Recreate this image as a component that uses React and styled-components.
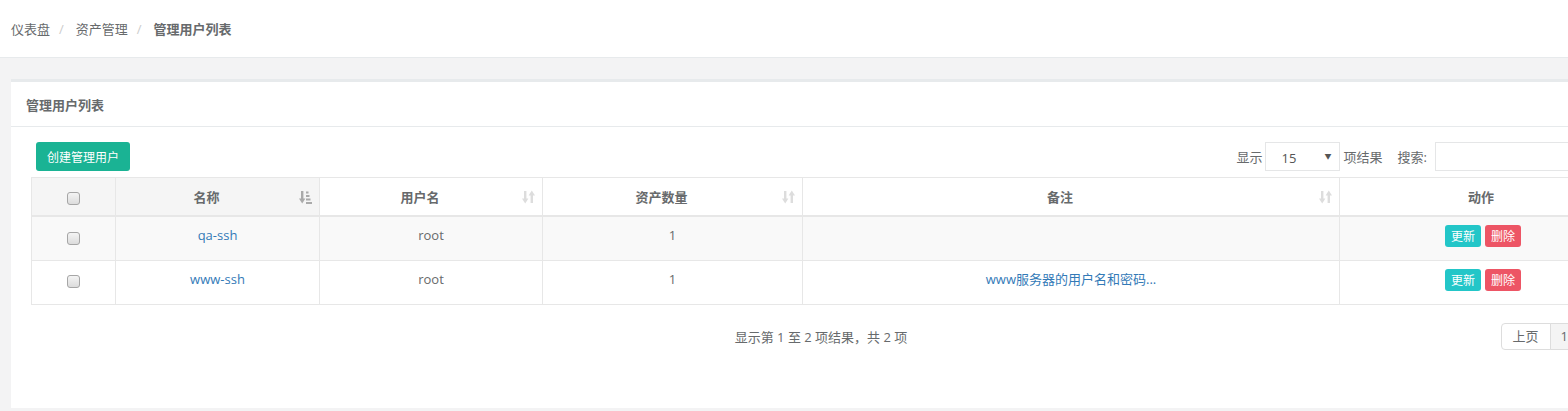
import React from "react";
import styled, { createGlobalStyle } from "styled-components";

const GlobalStyle = createGlobalStyle`
  html, body {
    margin: 0;
    padding: 0;
    overflow: hidden;
    background: #f3f3f4;
  }
  body {
    font-family: "Open Sans", "Noto Sans CJK SC", sans-serif;
    font-size: 13px;
    color: #676a6c;
  }
`;

const Page = styled.div`
  width: 1660px;
  min-height: 411px;
  background: #f3f3f4;
`;

const TopBar = styled.div`
  height: 57px;
  background: #fff;
  border-bottom: 1px solid #e7eaec;
  display: flex;
  align-items: center;
  padding-left: 11px;
`;

const Crumb = styled.span`
  color: #676a6c;
  font-weight: ${(p) => (p.active ? 700 : 400)};
`;

const Sep = styled.span`
  color: #ccc;
  padding: 0 12px 0 9px;
`;

const Wrapper = styled.div`
  padding: 21px 0 0 11px;
`;

const Panel = styled.div`
  width: 1632px;
  background: #fff;
  border-top: 3px solid #e7eaec;
  height: 326px;
`;

const PanelTitle = styled.div`
  height: 44px;
  display: flex;
  align-items: center;
  padding-left: 15px;
  border-bottom: 1px solid #e7eaec;
  font-weight: 700;
  font-size: 13px;
`;

const PanelBody = styled.div`
  padding: 15px 20px 0 20px;
`;

const Toolbar = styled.div`
  display: flex;
  justify-content: space-between;
  align-items: center;
  height: 29px;
  margin-bottom: 6px;
`;

const PrimaryButton = styled.button`
  margin-left: 5px;
  height: 29px;
  padding: 0 11px;
  border: none;
  border-radius: 3px;
  background: #1ab394;
  color: #fff;
  font-family: inherit;
  font-size: 12px;
`;

const Controls = styled.div`
  display: flex;
  align-items: center;
  margin-right: 2px;
`;

const Label = styled.span`
  margin: 0 ${(p) => p.gap || 4}px 0 0;
`;

const SelectBox = styled.div`
  position: relative;
  width: 75px;
  height: 29px;
  box-sizing: border-box;
  border: 1px solid #e5e6e7;
  margin-right: 4px;
  display: flex;
  align-items: center;
  padding: 3px 0 0 16px;
  font-size: 13px;
  color: #555;
`;

const Caret = styled.span`
  position: absolute;
  right: 7px;
  top: 8px;
  font-size: 7px;
  color: #555;
`;

const SearchInput = styled.input`
  width: 186px;
  height: 29px;
  box-sizing: border-box;
  border: 1px solid #e5e6e7;
  margin-left: 4px;
  outline: none;
`;

const Table = styled.table`
  width: 1592px;
  border-collapse: collapse;
  table-layout: fixed;
`;

const Th = styled.th`
  position: relative;
  height: 37px;
  border: 1px solid #e7e7e7;
  border-bottom: 2px solid #e7e7e7;
  background: ${(p) => (p.sorted ? "#f5f5f5" : "#fff")};
  font-weight: 700;
  text-align: center;
  padding: 0 ${(p) => (p.sortable ? 22 : 0)}px 0 0;
  vertical-align: middle;
`;

const SortIcon = styled.span`
  position: absolute;
  right: 7px;
  top: 12px;
  display: flex;
`;

const Tr = styled.tr`
  background: ${(p) => (p.striped ? "#f9f9f9" : "#fff")};
`;

const Td = styled.td`
  height: 44px;
  box-sizing: border-box;
  border: 1px solid #e7e7e7;
  text-align: center;
  vertical-align: top;
  padding: 8px 8px 0 ${(p) => (p.shift ? 12 : 8)}px;
  line-height: 20px;
`;

const Link = styled.a`
  color: #337ab7;
  text-decoration: none;
`;

const Check = styled.span`
  display: inline-block;
  width: 11px;
  height: 11px;
  margin-top: ${(p) => (p.head ? 0 : 3)}px;
  border: 1px solid #a6a6a6;
  border-radius: 3px;
  background: linear-gradient(#f4f4f4, #dcdcdc);
  vertical-align: middle;
`;

const ActionButton = styled.button`
  height: 22px;
  padding: 0 6px;
  border: none;
  border-radius: 3px;
  background: ${(p) => p.color};
  color: #fff;
  font-family: inherit;
  font-size: 12px;
  margin: 0 2px;
`;

const Footer = styled.div`
  display: grid;
  grid-template-columns: 1fr auto 1fr;
  align-items: center;
  margin-top: 18px;
`;

const Info = styled.div`
  grid-column: 2;
  margin-left: -12px;
`;

const Pager = styled.div`
  grid-column: 3;
  justify-self: end;
  display: flex;
  margin-right: 44px;
`;

const PageItem = styled.span`
  height: 25px;
  line-height: 25px;
  padding: 0 ${(p) => (p.narrow ? 10 : 11)}px;
  border: 1px solid #ddd;
  margin-left: -1px;
  background: ${(p) => (p.active ? "#f4f4f4" : "#fff")};
  color: #676a6c;
  font-size: 13px;
  &:first-child {
    border-radius: 4px 0 0 4px;
  }
  &:last-child {
    border-radius: 0 4px 4px 0;
  }
`;

const SortBoth = () => (
  <svg width="13" height="14" viewBox="0 0 13 14">
    <g fill="#ddd">
      <rect x="2" y="1" width="2.4" height="9" />
      <polygon points="0,8.5 6.4,8.5 3.2,13.5" />
      <rect x="8.6" y="4" width="2.4" height="9" />
      <polygon points="6.6,5.5 13,5.5 9.8,0.5" />
    </g>
  </svg>
);

const SortAsc = () => (
  <svg width="13" height="14" viewBox="0 0 13 14">
    <g fill="#aaa">
      <rect x="2" y="1" width="2.4" height="9" />
      <polygon points="0,8.5 6.4,8.5 3.2,13.5" />
      <rect x="7" y="1.5" width="2.5" height="2" />
      <rect x="7" y="5" width="3.5" height="2" />
      <rect x="7" y="8.5" width="4.5" height="2" />
      <rect x="7" y="12" width="6" height="2" />
    </g>
  </svg>
);

const columns = [
  { label: "", width: 84, check: true },
  { label: "名称", width: 204, sortable: true, sorted: true },
  { label: "用户名", width: 223, sortable: true },
  { label: "资产数量", width: 260, sortable: true },
  { label: "备注", width: 537, sortable: true },
  { label: "动作" },
];

const rows = [
  { name: "qa-ssh", user: "root", count: 1, note: "" },
  { name: "www-ssh", user: "root", count: 1, note: "www服务器的用户名和密码..." },
];

export default function App() {
  return (
    <Page>
      <GlobalStyle />
      <TopBar>
        <Crumb>仪表盘</Crumb>
        <Sep>/</Sep>
        <Crumb>资产管理</Crumb>
        <Sep>/</Sep>
        <Crumb active>管理用户列表</Crumb>
      </TopBar>

      <Wrapper>
        <Panel>
          <PanelTitle>管理用户列表</PanelTitle>
          <PanelBody>
            <Toolbar>
              <PrimaryButton>创建管理用户</PrimaryButton>
              <Controls>
                <Label gap={2}>显示</Label>
                <SelectBox>
                  15
                  <Caret>▼</Caret>
                </SelectBox>
                <Label gap={15}>项结果</Label>
                <Label gap={0}>搜索:</Label>
                <SearchInput />
              </Controls>
            </Toolbar>

            <Table>
              <colgroup>
                {columns.map((c, i) => (
                  <col key={i} style={c.width ? { width: c.width } : undefined} />
                ))}
              </colgroup>
              <thead>
                <tr>
                  {columns.map((c, i) => (
                    <Th key={i} sortable={c.sortable} sorted={c.sorted || c.check}>
                      {c.check ? <Check head /> : c.label}
                      {c.sortable && (
                        <SortIcon>{c.sorted ? <SortAsc /> : <SortBoth />}</SortIcon>
                      )}
                    </Th>
                  ))}
                </tr>
              </thead>
              <tbody>
                {rows.map((r, i) => (
                  <Tr key={i} striped={i % 2 === 0}>
                    <Td>
                      <Check />
                    </Td>
                    <Td>
                      <Link href="#">{r.name}</Link>
                    </Td>
                    <Td>{r.user}</Td>
                    <Td>{r.count}</Td>
                    <Td>
                      <Link href="#">{r.note}</Link>
                    </Td>
                    <Td shift>
                      <ActionButton color="#23c6c8">更新</ActionButton>
                      <ActionButton color="#ed5565">删除</ActionButton>
                    </Td>
                  </Tr>
                ))}
              </tbody>
            </Table>

            <Footer>
              <Info>显示第 1 至 2 项结果，共 2 项</Info>
              <Pager>
                <PageItem>上页</PageItem>
                <PageItem active narrow>1</PageItem>
              </Pager>
            </Footer>
          </PanelBody>
        </Panel>
      </Wrapper>
    </Page>
  );
}
